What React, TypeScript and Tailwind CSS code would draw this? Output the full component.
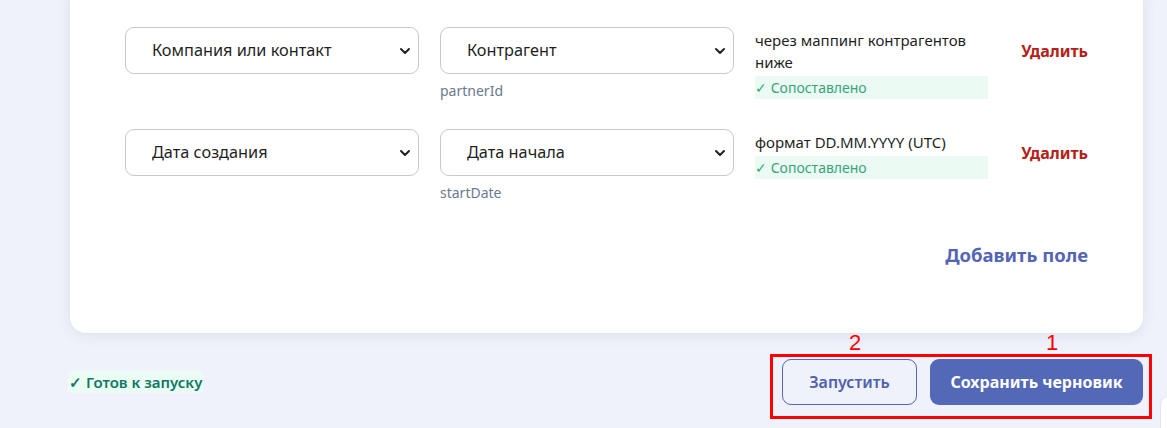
import React from "react";

type Mapping = {
  source: string;
  target: string;
  key: string;
  note: string;
};

const mappings: Mapping[] = [
  {
    source: "Компания или контакт",
    target: "Контрагент",
    key: "partnerId",
    note: "через маппинг контрагентов ниже",
  },
  {
    source: "Дата создания",
    target: "Дата начала",
    key: "startDate",
    note: "формат DD.MM.YYYY (UTC)",
  },
];

const Chevron: React.FC = () => (
  <svg
    className="pointer-events-none absolute right-[7px] top-1/2 -translate-y-1/2"
    width="12"
    height="12"
    viewBox="0 0 12 12"
    fill="none"
  >
    <path d="M2 4l4 4 4-4" stroke="#222" strokeWidth="2" strokeLinecap="round" strokeLinejoin="round" />
  </svg>
);

const Select: React.FC<{ value: string }> = ({ value }) => (
  <div className="relative h-[47px] w-[294px] rounded-[9px] border border-[#c9c9c9] bg-white">
    <select
      defaultValue={value}
      className="h-full w-full appearance-none bg-transparent pl-[26px] pr-8 text-[16.3px] text-[#1f1f1f] outline-none"
    >
      <option>{value}</option>
    </select>
    <Chevron />
  </div>
);

const MappingRow: React.FC<{ row: Mapping }> = ({ row }) => (
  <div className="flex items-start gap-[21px]">
    <Select value={row.source} />
    <div className="flex flex-col">
      <Select value={row.target} />
      <span className="mt-[7px] text-[14px] leading-[20px] text-[#6b7a8f]">{row.key}</span>
    </div>
    <div className="w-[233px] pt-[2px]">
      <p className="text-[15px] leading-[22px] text-[#1f1f1f]">{row.note}</p>
      <div className="mt-[3px] h-[23px] bg-[#ebfaf2] text-[14px] leading-[23px] text-[#39a47a]">
        ✓ Сопоставлено
      </div>
    </div>
    <div className="flex h-[47px] flex-1 items-center justify-end">
      <button className="text-[16px] font-bold text-[#b32218]">Удалить</button>
    </div>
  </div>
);

export default function App() {
  return (
    <div
      className="relative min-h-[428px] overflow-hidden bg-[#eff2fa] pl-[70px] pr-[24px]"
      style={{ fontFamily: '"Noto Sans", "Open Sans", sans-serif' }}
    >
      {/* mapping card */}
      <div className="-mt-5 rounded-2xl bg-white px-[55px] pb-[64px] pt-[47px] shadow-[0_2px_14px_rgba(60,72,120,0.10)]">
        <div className="flex flex-col gap-[28px]">
          {mappings.map((row) => (
            <MappingRow key={row.key} row={row} />
          ))}
        </div>
        <div className="mt-[38px] flex justify-end">
          <button className="text-[18.5px] font-bold text-[#5565b5]">Добавить поле</button>
        </div>
      </div>

      {/* footer */}
      <div className="-ml-[2px] mt-[26px] flex items-center justify-between">
        <span className="bg-[#eafcf3] px-[1px] text-[15px] font-semibold leading-[22px] text-[#0e7864]">
          ✓ Готов к запуску
        </span>
        <div className="flex gap-[13px]">
          <button className="h-[46px] w-[135px] rounded-[9px] border border-[#5467b8] text-[16px] font-semibold text-[#5060ad]">
            Запустить
          </button>
          <button className="h-[46px] w-[213px] rounded-[9px] bg-[#5468b8] text-[16px] font-bold text-white">
            Сохранить черновик
          </button>
        </div>
      </div>

      {/* callouts */}
      <div className="pointer-events-none absolute left-[770px] top-[354px] h-[65px] w-[382px] border-[3px] border-[#ff0000]" />
      <span className="absolute left-[849px] top-[330px] text-[22px] leading-[26px] text-[#ff0000]" style={{ fontFamily: '"Liberation Sans", sans-serif' }}>
        2
      </span>
      <span className="absolute left-[1046px] top-[330px] text-[22px] leading-[26px] text-[#ff0000]" style={{ fontFamily: '"Liberation Sans", sans-serif' }}>
        1
      </span>

      {/* edge of a floating widget */}
      <div className="absolute left-[1160px] top-[396px] h-[60px] w-[40px] rounded-lg border border-[#e3e6ee] bg-white" />
    </div>
  );
}
